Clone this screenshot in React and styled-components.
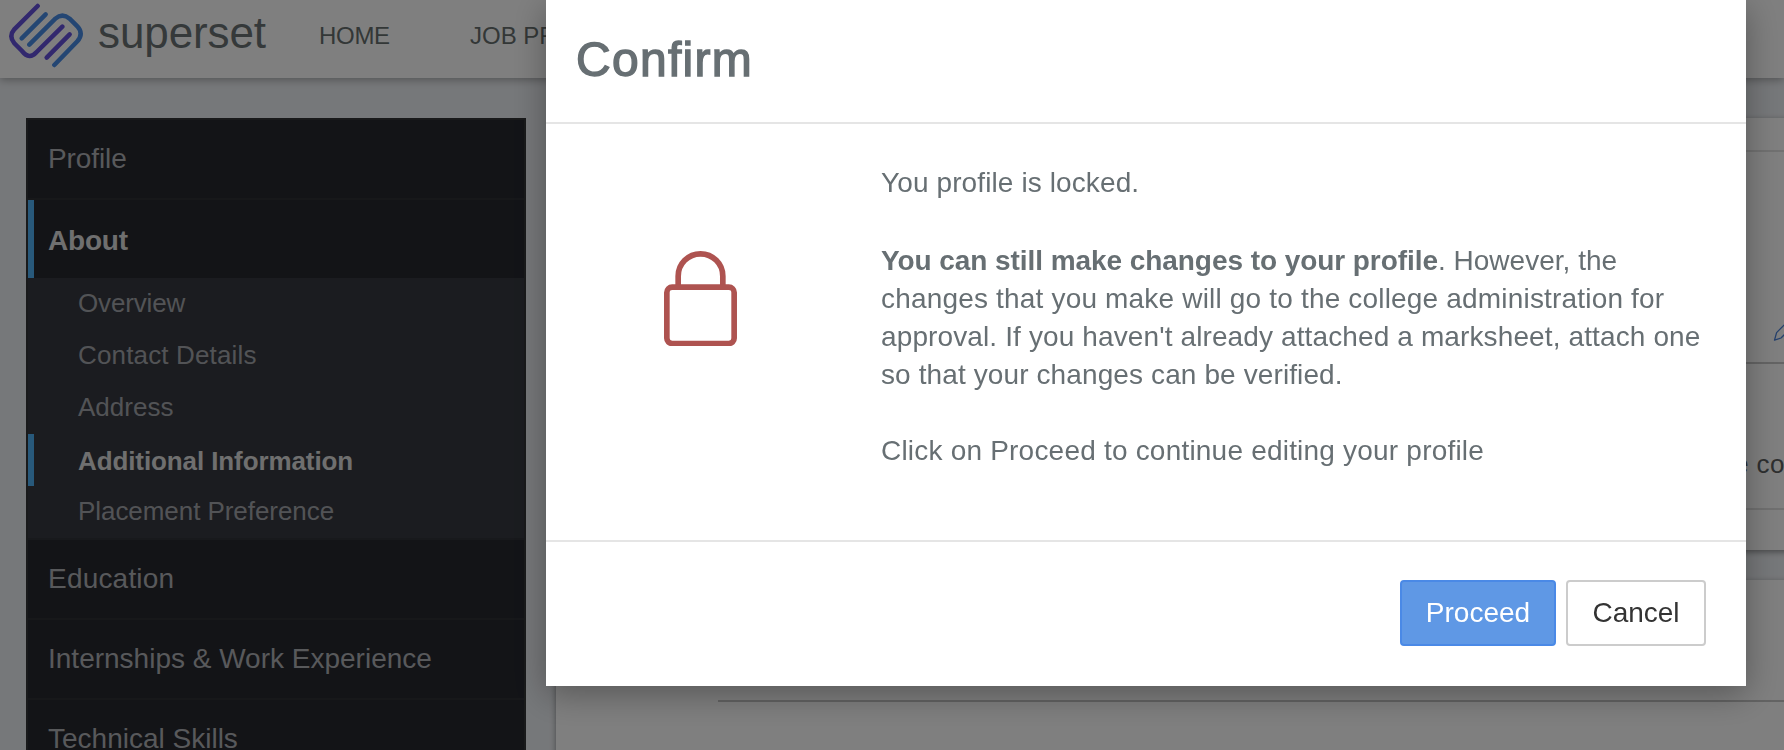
import React from 'react';
import styled, { createGlobalStyle } from 'styled-components';

const GlobalStyle = createGlobalStyle`
  *, *::before, *::after { box-sizing: border-box; }
  html, body { margin: 0; height: 750px; overflow: hidden; }
  body {
    background: #edf0f4;
    color: #676f73;
    font-family: "Liberation Sans", Arial, sans-serif;
    font-size: 28px;
    font-kerning: normal;
  }
`;

const Page = styled.div`
  height: 750px;
  overflow: hidden;
  display: flex;
  flex-direction: column;
`;

const Header = styled.header`
  flex: none;
  height: 78px;
  padding-left: 8px;
  display: flex;
  align-items: flex-start;
  background: #fff;
  box-shadow: 0 2px 8px rgba(0, 0, 0, 0.3);
  z-index: 1;
`;

const Logo = styled.svg`
  flex: none;
  width: 78px;
  height: 70px;
`;

const Brand = styled.span`
  width: 221px;
  margin-left: 12px;
  font-size: 44px;
  line-height: 66px;
  letter-spacing: -0.1px;
  color: #6a7274;
`;

const NavLink = styled.a`
  width: 151px;
  font-size: 24px;
  line-height: 71px;
  letter-spacing: ${(p) => p.$track || 0};
  white-space: nowrap;
  color: #676f6e;
`;

const Columns = styled.div`
  flex: 1;
  min-height: 0;
  display: flex;
  gap: 30px;
  padding: 40px 0 0 26px;
`;

const Sidebar = styled.nav`
  flex: none;
  width: 500px;
  height: 700px;
  border: 2px solid #333536;
  background: #26282f;
`;

const MenuItem = styled.div`
  height: ${(p) => (p.$open ? 78 : 80)}px;
  padding-left: ${(p) => (p.$open ? 14 : 20)}px;
  border-left: ${(p) => (p.$open ? '6px solid #50b2f6' : 'none')};
  border-bottom: ${(p) => (p.$open ? 'none' : '2px solid #2e3035')};
  line-height: ${(p) => (p.$open ? 81 : 78)}px;
  font-weight: ${(p) => (p.$open ? 700 : 400)};
  color: ${(p) => (p.$open ? '#dedede' : '#b0b2b7')};
  letter-spacing: ${(p) => p.$track || 0};
  white-space: nowrap;
`;

const SubMenu = styled.div`
  height: 262px;
  background: #363940;
  border-bottom: 2px solid #303238;
`;

const SubItem = styled.div`
  height: 52px;
  padding-left: ${(p) => (p.$active ? 44 : 50)}px;
  border-left: ${(p) => (p.$active ? '6px solid #50b2f6' : 'none')};
  font-size: 26px;
  line-height: ${(p) => (p.$active ? 54 : 50)}px;
  font-weight: ${(p) => (p.$active ? 700 : 400)};
  color: ${(p) => (p.$active ? '#dedede' : '#a5a7ac')};
  letter-spacing: ${(p) => p.$track || 0};
  white-space: nowrap;
`;

const Content = styled.main`
  flex: 1;
  display: flex;
  flex-direction: column;
  gap: 30px;
`;

const Card = styled.section`
  flex: none;
  height: ${(p) => p.$height}px;
  background: #fff;
  box-shadow: 0 2px 6px rgba(0, 0, 0, 0.4);
`;

const CardTop = styled.div`
  height: 34px;
  border-bottom: 2px solid #e2e2e2;
`;

const CardTitle = styled.div`
  height: 212px;
  padding: 163px 0 0 1217px;
  border-bottom: 2px solid #c8c8c8;
`;

const Pencil = styled.svg`
  display: block;
  width: 26px;
  height: 26px;
`;

const CardNote = styled.div`
  height: 146px;
  padding: 83px 0 0 1178px;
  border-bottom: 2px solid #e0e0e0;
  font-size: 26px;
  line-height: 34px;
  letter-spacing: 0.4px;
  white-space: nowrap;
  color: #5c5e60;
`;

const FieldLine = styled.div`
  height: 122px;
  margin-left: 162px;
  border-bottom: 2px solid #c6c6c6;
`;

const Backdrop = styled.div`
  position: fixed;
  inset: 0;
  z-index: 10;
  padding-left: 546px;
  background: rgba(0, 0, 0, 0.5);
`;

const Modal = styled.div`
  width: 1200px;
  height: 686px;
  display: flex;
  flex-direction: column;
  background: #fff;
  box-shadow: 0 8px 32px rgba(0, 0, 0, 0.32);
`;

const ModalHeader = styled.div`
  height: 124px;
  padding: 34px 30px 0;
  border-bottom: 2px solid #e5e5e5;
`;

const ModalTitle = styled.h4`
  margin: 0;
  font-size: 48px;
  line-height: 52px;
  font-weight: 400;
  letter-spacing: 1.3px;
  -webkit-text-stroke: 1.4px #676f73;
`;

const ModalBody = styled.div`
  flex: 1;
  display: flex;
  padding-top: 40px;
`;

const LockCell = styled.div`
  width: 335px;
  padding: 86.7px 0 0 118.3px;
`;

const Lock = styled.svg`
  display: block;
  width: 73px;
  height: 95.3px;
`;

const Message = styled.div`
  line-height: 38px;
`;

const Paragraph = styled.p`
  margin: 0 0 ${(p) => p.$gap || 0}px;
`;

const Line = styled.span`
  display: block;
  white-space: nowrap;
  letter-spacing: ${(p) => p.$track};
`;

const Strong = styled.b`
  letter-spacing: -0.065px;
`;

const ModalFooter = styled.div`
  height: 146px;
  padding: 38px 40px 0;
  border-top: 2px solid #e5e5e5;
  display: flex;
  justify-content: flex-end;
  gap: 10px;
`;

const Button = styled.button`
  width: ${(p) => p.$width}px;
  height: 66px;
  padding: 0;
  border: 2px solid ${(p) => (p.$primary ? '#4a89e6' : '#cccccc')};
  border-radius: 4px;
  background: ${(p) => (p.$primary ? '#5f98e5' : '#fff')};
  color: ${(p) => (p.$primary ? '#fff' : '#333')};
  font: 400 28px "Liberation Sans", Arial, sans-serif;
`;

export default function App() {
  return (
    <>
      <GlobalStyle />
      <Page>
        <Header>
          <Logo viewBox="24 0 234 210" fill="none" strokeWidth="13.5" strokeLinecap="round">
            <path stroke="#6450dc" d="M113 18 L43 88 Q25 109 43 130 L66 153 Q88 181 110 156 L187 80" />
            <path stroke="#488ce6" d="M137 43 L65 115" />
            <path stroke="#488ce6" d="M88 134 L166 56 Q187 38 209 56 L232 79 Q252 101 232 124 L163 195" />
            <path stroke="#6450dc" d="M209 103 L140 173" />
          </Logo>
          <Brand>superset</Brand>
          <NavLink $track="-0.3px">HOME</NavLink>
          <NavLink>JOB PROFILES</NavLink>
        </Header>
        <Columns>
          <Sidebar>
            <MenuItem $track="-0.1px">Profile</MenuItem>
            <MenuItem $open $track="-0.2px">About</MenuItem>
            <SubMenu>
              <SubItem $track="-0.15px">Overview</SubItem>
              <SubItem $track="0.15px">Contact Details</SubItem>
              <SubItem>Address</SubItem>
              <SubItem $active $track="-0.1px">Additional Information</SubItem>
              <SubItem $track="-0.06px">Placement Preference</SubItem>
            </SubMenu>
            <MenuItem $track="0.2px">Education</MenuItem>
            <MenuItem>Internships &amp; Work Experience</MenuItem>
            <MenuItem>Technical Skills</MenuItem>
          </Sidebar>
          <Content>
            <Card $height={432}>
              <CardTop />
              <CardTitle>
                <Pencil viewBox="0 0 26 26" fill="none" stroke="#4a80d8" strokeWidth="1.3" strokeLinejoin="round">
                  <path d="M1.500 25.200 L3.600 17.600 L19 2.200 L24 7.200 L8 23 Z" />
                </Pencil>
              </CardTitle>
              <CardNote>e college</CardNote>
            </Card>
            <Card $height={300}>
              <FieldLine />
            </Card>
          </Content>
        </Columns>
      </Page>
      <Backdrop>
        <Modal role="dialog">
          <ModalHeader>
            <ModalTitle>Confirm</ModalTitle>
          </ModalHeader>
          <ModalBody>
            <LockCell>
              <Lock viewBox="0 0 219 286" fill="none" stroke="#ae5350" strokeWidth="17">
                <path d="M42.500 102 V75.500 a67 67 0 0 1 134 0 V102" />
                <rect x="8.500" y="108.500" width="202" height="169" rx="16" />
              </Lock>
            </LockCell>
            <Message>
              <Paragraph $gap={40}>
                <Line $track="0.11px">You profile is locked.</Line>
              </Paragraph>
              <Paragraph $gap={38}>
                <Line $track="0.02px"><Strong>You can still make changes to your profile</Strong>. However, the</Line>
                <Line $track="0.18px">changes that you make will go to the college administration for</Line>
                <Line $track="0.121px">approval. If you haven't already attached a marksheet, attach one</Line>
                <Line $track="0.11px">so that your changes can be verified.</Line>
              </Paragraph>
              <Paragraph>
                <Line $track="0.205px">Click on Proceed to continue editing your profile</Line>
              </Paragraph>
            </Message>
          </ModalBody>
          <ModalFooter>
            <Button $primary $width={156}>Proceed</Button>
            <Button $width={140}>Cancel</Button>
          </ModalFooter>
        </Modal>
      </Backdrop>
    </>
  );
}
